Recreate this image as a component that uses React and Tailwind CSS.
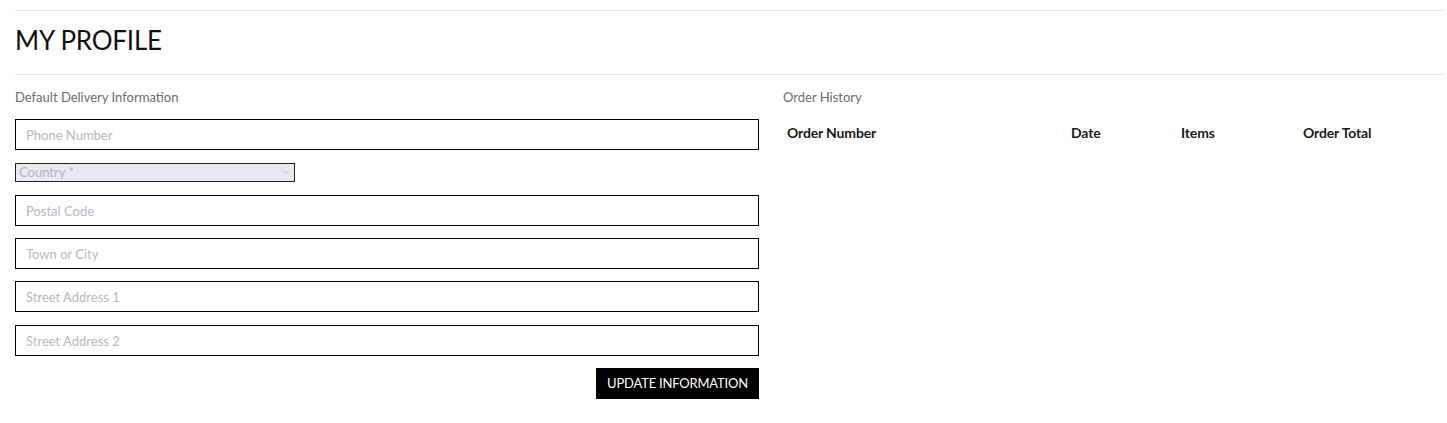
import React from "react";

const font = { fontFamily: "Lato, 'Open Sans', sans-serif" };

function Field({ placeholder }) {
  return (
    <input
      type="text"
      placeholder={placeholder}
      className="block w-full h-[31px] border border-black px-[10px] text-[13px] text-black placeholder:text-[#b5b9bf] outline-none bg-white"
      style={font}
    />
  );
}

export default function App() {
  return (
    <div className="bg-white w-[1447px] h-[423px] overflow-hidden pl-[15px] pr-[2px]" style={font}>
      <div className="h-[10px]" />
      <div className="border-t border-[#e3e3e3]">
        <h1 className="h-[63px] flex items-center text-[26px] leading-none text-[#111] pb-[6px] tracking-[-0.2px]">
          MY PROFILE
        </h1>
      </div>
      <div className="border-t border-[#e3e3e3] flex pt-[13px]">
        <div className="w-[744px] shrink-0">
          <div className="text-[13px] leading-[18px] text-[#6b6b6b]">Default Delivery Information</div>
          <div className="mt-[13px] flex flex-col">
            <Field placeholder="Phone Number" />
            <div className="mt-[13px] relative w-[280px] h-[19px] border border-[#222] bg-[#e9e9ee] flex items-center pl-[3px]">
              <span className="text-[13px] text-[#b3b5bc] leading-none">Country *</span>
              <svg className="absolute right-[4px] top-[5px]" width="8" height="6" viewBox="0 0 8 6">
                <path d="M1 1.5 L4 4.5 L7 1.5" fill="none" stroke="#b8bac0" strokeWidth="1" />
              </svg>
            </div>
            <div className="mt-[13px]"><Field placeholder="Postal Code" /></div>
            <div className="mt-[12px]"><Field placeholder="Town or City" /></div>
            <div className="mt-[12px]"><Field placeholder="Street Address 1" /></div>
            <div className="mt-[13px]"><Field placeholder="Street Address 2" /></div>
            <div className="mt-[12px] flex justify-end">
              <button className="h-[31px] w-[163px] bg-black text-white text-[13px] tracking-[-0.2px]" style={font}>
                UPDATE INFORMATION
              </button>
            </div>
          </div>
        </div>
        <div className="ml-[24px] flex-1">
          <div className="text-[13px] leading-[18px] text-[#6b6b6b]">Order History</div>
          <div className="mt-[18px] flex text-[14px] font-bold text-[#1a1a1a] leading-[18px] tracking-[-0.15px]">
            <div className="w-[288px] pl-[4px]">Order Number</div>
            <div className="w-[110px]">Date</div>
            <div className="w-[122px]">Items</div>
            <div>Order Total</div>
          </div>
        </div>
      </div>
    </div>
  );
}
